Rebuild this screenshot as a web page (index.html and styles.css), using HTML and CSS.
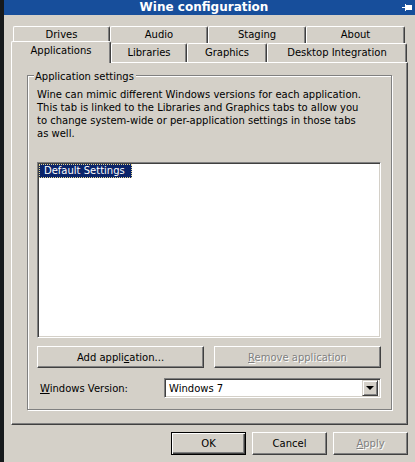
FILE: index.html
```html
<!DOCTYPE html>
<html lang="en">
<head>
    <meta charset="UTF-8">
    <meta name="viewport" content="width=device-width, initial-scale=1.0">
    <title>Wine configuration</title>
    <link rel="stylesheet" href="styles.css">
</head>

<body>
    <div class="window">
        <div class="titlebar">
            <span class="title">Wine configuration</span>
            <svg class="pin" width="10" height="7" viewBox="0 0 10 7">
                <rect x="0" y="3" width="3" height="1" fill="#fff"/>
                <rect x="3" y="0" width="1" height="7" fill="#fff"/>
                <rect x="4" y="1" width="6" height="5" fill="#fff"/>
            </svg>
        </div>

        <div class="content">
            <div class="tabs">
                <div class="tab-row back">
                    <div class="tab t-drives">Drives</div>
                    <div class="tab t-audio">Audio</div>
                    <div class="tab t-staging">Staging</div>
                    <div class="tab t-about">About</div>
                </div>
                <div class="tab-row front">
                    <div class="tab t-apps selected">Applications</div>
                    <div class="tab t-libs">Libraries</div>
                    <div class="tab t-graphics">Graphics</div>
                    <div class="tab t-desktop">Desktop Integration</div>
                </div>
            </div>

            <div class="panel">
                <div class="group">
                    <div class="group-title">Application settings</div>
                    <p class="desc">Wine can mimic different Windows versions for each application.<br>
                        This tab is linked to the Libraries and Graphics tabs to allow you<br>
                        to change system-wide or per-application settings in those tabs<br>
                        as well.</p>

                    <div class="list">
                        <div class="item selected">Default Settings</div>
                    </div>

                    <div class="btn-row">
                        <button class="btn wide">Add appli<u>c</u>ation...</button>
                        <button class="btn wide disabled"><u>R</u>emove application</button>
                    </div>

                    <div class="version-row">
                        <span class="version-label"><u>W</u>indows Version:</span>
                        <div class="combo">
                            <span class="combo-text">Windows 7</span>
                            <span class="combo-arrow"><span class="arrow"></span></span>
                        </div>
                    </div>
                </div>
            </div>

            <div class="dialog-buttons">
                <button class="btn small default">OK</button>
                <button class="btn small">Cancel</button>
                <button class="btn small disabled"><u>A</u>pply</button>
            </div>
        </div>
    </div>
</body>
</html>
```

FILE: styles.css
```css
* {
    margin: 0;
    padding: 0;
    box-sizing: border-box;
}

body {
    background: #16191c;
    height: 462px;
    overflow: hidden;
    padding-left: 4px;
    font-family: "DejaVu Sans", sans-serif;
    font-size: 10px;
    color: #000;
}

.window {
    width: 411px;
    height: 462px;
    background: #d4d0c8;
}

/* title bar */
.titlebar {
    height: 15px;
    background: #174e9b;
    display: flex;
    align-items: center;
    padding-right: 3px;
}
.title {
    flex: 1;
    text-align: center;
    color: #fff;
    font-weight: bold;
    font-size: 12px;
    padding-left: 2px;
    line-height: 15px;
}
.pin {
    display: block;
}

.content {
    padding: 0 7px;
}

/* tabs */
.tabs {
    padding-top: 11px;
}
.tab-row {
    display: flex;
}
.tab-row.back {
    margin-left: 2px;
    height: 17px;
}
.tab-row.front {
    height: 19px;
}
.tab {
    border-top: 1px solid #fff;
    border-left: 1px solid #fff;
    border-right: 1px solid #404040;
    border-radius: 2px 2px 0 0;
    box-shadow: inset -1px 0 #808080;
    text-align: center;
    line-height: 15px;
}
.t-drives { width: 97px; }
.t-audio { width: 98px; }
.t-staging { width: 98px; }
.t-about { width: 99px; }
.t-apps { width: 100px; }
.t-libs { width: 76px; }
.t-graphics { width: 80px; }
.t-desktop { width: 140px; line-height: 17px; }
.t-libs, .t-graphics { line-height: 17px; }

.tab.selected {
    position: relative;
    z-index: 1;
    height: 22px;
    margin-top: -2px;
    background: #d4d0c8;
    line-height: 18px;
}

/* page */
.panel {
    width: 397px;
    height: 363px;
    border-top: 1px solid #fff;
    border-left: 1px solid #fff;
    border-right: 1px solid #404040;
    border-bottom: 1px solid #404040;
    box-shadow: inset -1px -1px #808080;
    padding: 12px 0 0 15px;
}

.group {
    width: 365px;
    height: 335px;
    border: 1px solid #808080;
    box-shadow: 1px 1px #fff, inset 1px 1px #fff;
    padding: 0 10px 0 9px;
    display: flex;
    flex-direction: column;
}
.group-title {
    align-self: flex-start;
    margin: -6px 0 0 -3px;
    padding: 0 2px 0 1px;
    background: #d4d0c8;
    line-height: 13px;
}
.desc {
    margin-top: 5px;
    line-height: 13px;
    white-space: nowrap;
}

.list {
    margin-top: 22px;
    height: 176px;
    background: #fff;
    border: 1px solid;
    border-color: #808080 #fff #fff #808080;
    box-shadow: inset 1px 1px #404040, inset -1px -1px #d4d0c8;
    padding: 1px;
}
.item {
    display: inline-block;
    height: 14px;
    line-height: 12px;
    padding: 0 6px 0 4px;
}
.item.selected {
    background: #0a246a;
    color: #fff;
    border: 1px dotted #e8d890;
}

/* buttons */
.btn {
    font: inherit;
    color: #000;
    background: #d4d0c8;
    border: 1px solid;
    border-color: #fff #404040 #404040 #fff;
    box-shadow: inset -1px -1px #808080;
    text-align: center;
}
.btn.disabled {
    color: #808080;
    text-shadow: 1px 1px #fff;
}
.btn.default {
    border-color: #000;
    box-shadow: inset 1px 1px #fff, inset -1px -1px #404040, inset -2px -2px #808080;
}

.btn-row {
    display: flex;
    gap: 10px;
    margin-top: 8px;
}
.btn.wide {
    width: 167px;
    height: 22px;
}

.version-row {
    display: flex;
    align-items: center;
    margin-top: 10px;
}
.version-label {
    width: 127px;
    padding-left: 3px;
}
.combo {
    width: 217px;
    height: 20px;
    background: #fff;
    border: 1px solid;
    border-color: #808080 #fff #fff #808080;
    box-shadow: inset 1px 1px #404040, inset -1px -1px #d4d0c8;
    padding: 2px 2px 2px 4px;
    display: flex;
    align-items: center;
}
.combo-text {
    flex: 1;
}
.combo-arrow {
    width: 16px;
    height: 16px;
    background: #d4d0c8;
    border: 1px solid;
    border-color: #d4d0c8 #404040 #404040 #d4d0c8;
    box-shadow: inset 1px 1px #fff, inset -1px -1px #808080;
    display: flex;
    align-items: center;
    justify-content: center;
}
.arrow {
    width: 0;
    height: 0;
    border-left: 4px solid transparent;
    border-right: 4px solid transparent;
    border-top: 4px solid #000;
    margin-left: -1px;
}

.dialog-buttons {
    display: flex;
    justify-content: flex-end;
    gap: 6px;
    margin-top: 7px;
}
.btn.small {
    width: 75px;
    height: 23px;
}
```
